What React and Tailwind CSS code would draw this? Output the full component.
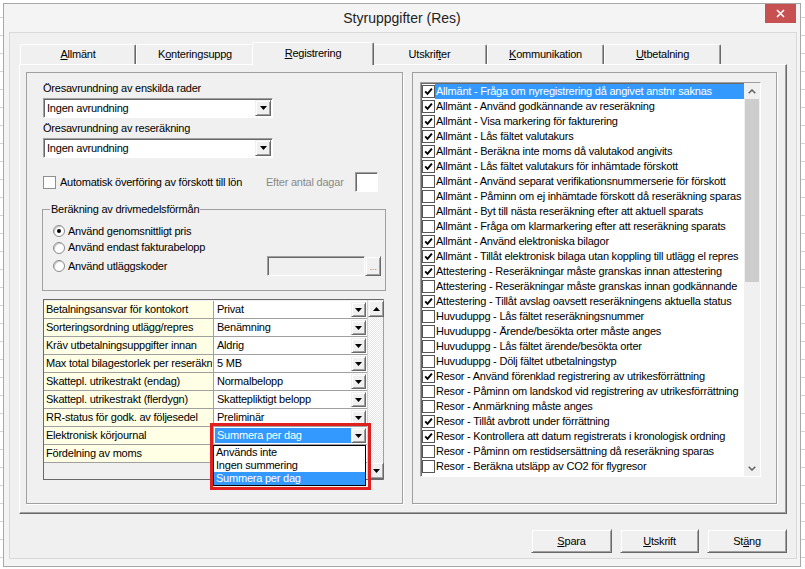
import React from "react";

const items = [
  ["Allmänt - Fråga om nyregistrering då angivet anstnr saknas", true],
  ["Allmänt - Använd godkännande av reseräkning", true],
  ["Allmänt - Visa markering för fakturering", true],
  ["Allmänt - Lås fältet valutakurs", true],
  ["Allmänt - Beräkna inte moms då valutakod angivits", true],
  ["Allmänt - Lås fältet valutakurs för inhämtade förskott", true],
  ["Allmänt - Använd separat verifikationsnummerserie för förskott", false],
  ["Allmänt - Påminn om ej inhämtade förskott då reseräkning sparas", false],
  ["Allmänt - Byt till nästa reseräkning efter att aktuell sparats", false],
  ["Allmänt - Fråga om klarmarkering efter att reseräkning sparats", false],
  ["Allmänt - Använd elektroniska bilagor", true],
  ["Allmänt - Tillåt elektronisk bilaga utan koppling till utlägg el repres", true],
  ["Attestering - Reseräkningar måste granskas innan attestering", true],
  ["Attestering - Reseräkningar måste granskas innan godkännande", false],
  ["Attestering - Tillåt avslag oavsett reseräkningens aktuella status", true],
  ["Huvuduppg - Lås fältet reseräkningsnummer", false],
  ["Huvuduppg - Ärende/besökta orter måste anges", false],
  ["Huvuduppg - Lås fältet ärende/besökta orter", false],
  ["Huvuduppg - Dölj fältet utbetalningstyp", false],
  ["Resor - Använd förenklad registrering av utrikesförrättning", true],
  ["Resor - Påminn om landskod vid registrering av utrikesförrättning", false],
  ["Resor - Anmärkning måste anges", false],
  ["Resor - Tillåt avbrott under förrättning", true],
  ["Resor - Kontrollera att datum registrerats i kronologisk ordning", true],
  ["Resor - Påminn om restidsersättning då reseräkning sparas", false],
  ["Resor - Beräkna utsläpp av CO2 för flygresor", false],
];

const rows = [
  ["Betalningsansvar för kontokort", "Privat"],
  ["Sorteringsordning utlägg/repres", "Benämning"],
  ["Kräv utbetalningsuppgifter innan", "Aldrig"],
  ["Max total bilagestorlek per reseräkning", "5 MB"],
  ["Skattepl. utrikestrakt (endag)", "Normalbelopp"],
  ["Skattepl. utrikestrakt (flerdygn)", "Skattepliktigt belopp"],
  ["RR-status för godk. av följesedel", "Preliminär"],
  ["Elektronisk körjournal", "Summera per dag"],
  ["Fördelning av moms", ""],
];

const tabs = [
  { pre: "", key: "A", post: "llmänt", w: "w-[116px]" },
  { pre: "K", key: "o", post: "nteringsuppg", w: "w-[118px]" },
  { pre: "", key: "R", post: "egistrering", w: "w-[122px]", sel: true },
  { pre: "Utskrif", key: "t", post: "er", w: "w-[115px]" },
  { pre: "", key: "K", post: "ommunikation", w: "w-[117px]" },
  { pre: "", key: "U", post: "tbetalning", w: "w-[117px]" },
];

const Down = () => (
  <svg width="7" height="4" viewBox="0 0 7 4">
    <path d="M0 0H7L3.5 4Z" fill="#000" />
  </svg>
);
const Up = () => (
  <svg width="7" height="4" viewBox="0 0 7 4">
    <path d="M0 4H7L3.5 0Z" fill="#000" />
  </svg>
);

const raised =
  "bg-[#f0f0f0] border border-t-[#f0f0f0] border-l-[#f0f0f0] border-r-[#696969] border-b-[#696969] shadow-[inset_1px_1px_0_#ffffff,inset_-1px_-1px_0_#a0a0a0]";
const sunken =
  "border border-t-[#a0a0a0] border-l-[#a0a0a0] border-r-white border-b-white shadow-[inset_1px_1px_0_#696969]";

function ArrowBtn({ className, up }) {
  return (
    <span className={"flex items-center justify-center shrink-0 " + raised + " " + className}>
      {up ? <Up /> : <Down />}
    </span>
  );
}

function Check({ on }) {
  return (
    <span className="w-[13px] h-[13px] shrink-0 border border-[#555555] bg-white flex items-center justify-center">
      {on && (
        <svg width="9" height="9" viewBox="0 0 9 9">
          <path d="M1.2 4.4 L3.5 6.8 L7.9 1.6" fill="none" stroke="#000" strokeWidth="1.9" />
        </svg>
      )}
    </span>
  );
}

function Radio({ on }) {
  return (
    <span className="w-[12px] h-[12px] rounded-full bg-white border border-[#8a8a8a] shrink-0 flex items-center justify-center shadow-[inset_1px_1px_0_#c8c8c8]">
      {on && <span className="w-[4px] h-[4px] rounded-full bg-black" />}
    </span>
  );
}

function Select({ value }) {
  return (
    <div className={"w-[230px] h-[20px] flex bg-white p-[1px] " + sunken}>
      <span className="flex-1 flex items-center pl-[2px] whitespace-nowrap">{value}</span>
      <ArrowBtn className="w-[16px] h-[16px]" />
    </div>
  );
}

function Button({ pre, k, post, w }) {
  return (
    <div className={"h-[24px] flex items-center justify-center " + raised + " " + w}>
      <span>
        {pre}
        <u>{k}</u>
        {post}
      </span>
    </div>
  );
}

export default function App() {
  return (
    <div className="w-[805px] h-[569px] overflow-hidden bg-white bg-[image:repeating-linear-gradient(to_bottom,transparent_0px,transparent_17px,#d4d4d4_17px,#d4d4d4_18px)] font-['Liberation_Sans',Arial,sans-serif] text-[11px] leading-[13px] tracking-[-0.22px] text-black">
      <div className="ml-[3px] mt-[3px] w-[798px] h-[564px] border border-[#a8a8a8] bg-[#f4f4f4] flex flex-col">
        {/* title bar */}
        <div className="h-[28px] flex items-start shrink-0">
          <div className="w-[35px] shrink-0" />
          <div className="flex-1 text-center text-[14px] leading-[28px] tracking-normal text-[#222222]">
            Styruppgifter (Res)
          </div>
          <div className="w-[31px] h-[19px] mr-[4px] bg-[#c75050] flex items-center justify-center">
            <svg width="9" height="9" viewBox="0 0 9 9">
              <path d="M1 1L8 8M8 1L1 8" stroke="#fff" strokeWidth="1.6" />
            </svg>
          </div>
        </div>

        {/* client */}
        <div className="ml-[5px] w-[788px] h-[527px] border border-[#d9d9d9] bg-[#f0f0f0] flex flex-col pl-[9px] pt-[9px]">
          {/* tabs */}
          <div className="flex items-end h-[22px] pl-[1px]">
            {tabs.map((t, i) =>
              t.sel ? (
                <div
                  key={i}
                  className={
                    "relative z-10 -mx-[2px] -mb-[1px] h-[23px] bg-[#f0f0f0] border-t border-l border-r border-t-white border-l-white border-r-[#696969] shadow-[inset_-1px_0_0_#a0a0a0] rounded-t-[2px] flex items-start justify-center pt-[4px] " +
                    t.w
                  }
                >
                  <span>
                    {t.pre}
                    <u>{t.key}</u>
                    {t.post}
                  </span>
                </div>
              ) : (
                <div
                  key={i}
                  className={
                    "h-[20px] bg-[#f0f0f0] border-t border-l border-r border-t-white border-l-white border-r-[#696969] shadow-[inset_-1px_0_0_#a0a0a0] rounded-t-[2px] flex items-center justify-center " +
                    t.w
                  }
                >
                  <span>
                    {t.pre}
                    <u>{t.key}</u>
                    {t.post}
                  </span>
                </div>
              )
            )}
          </div>

          {/* panel */}
          <div className="w-[768px] h-[450px] border border-t-white border-l-white border-r-[#696969] border-b-[#696969] shadow-[inset_-1px_-1px_0_#a0a0a0] flex pl-[6px] pt-[7px]">
            {/* left box */}
            <div className="w-[377px] h-[432px] border border-[#a0a0a0] shadow-[1px_1px_0_#ffffff] flex flex-col pl-[16px] pt-[9px]">
              <div className="h-[13px]">Öresavrundning av enskilda rader</div>
              <div className="mt-[3px]">
                <Select value="Ingen avrundning" />
              </div>
              <div className="h-[13px] mt-[4px]">Öresavrundning av reseräkning</div>
              <div className="mt-[3px]">
                <Select value="Ingen avrundning" />
              </div>

              <div className="mt-[14px] h-[20px] flex items-center">
                <span className="w-[13px] h-[13px] shrink-0 bg-white border border-[#8e8f8f]" />
                <span className="ml-[4px] w-[206px] whitespace-nowrap">Automatisk överföring av förskott till lön</span>
                <span className="w-[89px] text-[#8a8a8a] whitespace-nowrap">Efter antal dagar</span>
                <span className={"w-[23px] h-[20px] bg-white " + sunken} />
              </div>

              <fieldset className="mt-[11px] -ml-[1px] w-[344px] border border-[#a0a0a0] pl-[7px] pr-[4px] pb-[14px]">
                <legend className="px-[1px] h-[13px] leading-[13px]">Beräkning av drivmedelsförmån</legend>
                <div className="mt-[7px] h-[16px] flex items-center">
                  <span className="ml-[3px]"><Radio on /></span>
                  <span className="ml-[3px]">Använd genomsnittligt pris</span>
                </div>
                <div className="h-[17px] flex items-center">
                  <span className="ml-[3px]"><Radio /></span>
                  <span className="ml-[3px]">Använd endast fakturabelopp</span>
                </div>
                <div className="h-[20px] flex items-center">
                  <span className="ml-[3px]"><Radio /></span>
                  <span className="ml-[3px]">Använd utläggskoder</span>
                  <span className={"ml-auto w-[98px] h-[20px] bg-[#f0f0f0] " + sunken} />
                  <span className={"w-[16px] h-[20px] flex items-end justify-center pb-[3px] text-[9px] leading-[9px] text-[#8a8a8a] " + raised}>...</span>
                </div>
              </fieldset>

              {/* grid */}
              <div className="mt-[8px] w-[341px] h-[181px] border border-t-[#696969] border-l-[#696969] border-r-[#a0a0a0] border-b-[#696969] flex relative">
                <div className="w-[323px] flex flex-col pt-[1px]">
                  {rows.map((r, i) => (
                    <div key={i} className="h-[18px] flex border-b border-[#a0a0a0] shrink-0">
                      <div className="w-[170px] shrink-0 bg-[#ffffe6] border-r border-[#a0a0a0] pl-[2px] flex items-center whitespace-nowrap overflow-hidden">
                        <span className="block w-[166px] overflow-hidden">{r[0]}</span>
                      </div>
                      <div className="flex-1 bg-white flex items-center">
                        {i === 7 ? (
                          <span className="ml-[1px] flex-1 h-[15px] bg-[#3399ff] text-white pl-[2px] flex items-center whitespace-nowrap">
                            {r[1]}
                          </span>
                        ) : (
                          <span className="flex-1 pl-[3px] whitespace-nowrap overflow-hidden">{r[1]}</span>
                        )}
                        {i < 8 && <ArrowBtn className="w-[15px] h-[15px] mr-[1px]" />}
                      </div>
                    </div>
                  ))}
                  <div className="flex-1 bg-[#f0f0f0]" />
                </div>
                <div className="w-[16px] flex flex-col border-l border-[#d0d0d0]">
                  <ArrowBtn up className="w-[16px] h-[17px]" />
                  <div className="flex-1 bg-[image:repeating-conic-gradient(#ffffff_0%_25%,#e4e4e4_0%_50%)] bg-[length:2px_2px]" />
                  <ArrowBtn className="w-[16px] h-[17px]" />
                </div>

                {/* open dropdown */}
                <div className="absolute left-[169px] top-[145px] w-[153px] h-[41px] bg-white border border-black flex flex-col z-10">
                  <div className="h-[13px] pl-[2px] whitespace-nowrap">Används inte</div>
                  <div className="h-[13px] pl-[2px] whitespace-nowrap">Ingen summering</div>
                  <div className="h-[13px] pl-[2px] bg-[#3399ff] text-white whitespace-nowrap">Summera per dag</div>
                </div>
                {/* red annotation */}
                <div className="absolute left-[166px] top-[123px] w-[161px] h-[67px] border-[3px] border-[#e0201f] z-20 pointer-events-none" />
              </div>
            </div>

            {/* right box */}
            <div className="ml-[9px] w-[365px] h-[432px] border border-[#a0a0a0] shadow-[1px_1px_0_#ffffff] pl-[7px] pt-[9px]">
              <div className={"w-[341px] h-[395px] bg-white flex " + sunken}>
                <div className="w-[323px] flex flex-col pt-[1px]">
                  {items.map((it, i) => (
                    <div key={i} className="h-[15px] flex items-center shrink-0 pl-[1px]">
                      <Check on={it[1]} />
                      <span
                        className={
                          "flex-1 h-[15px] pl-[1px] flex items-center whitespace-nowrap overflow-hidden " +
                          (i === 0 ? "bg-[#3399ff] text-white" : "")
                        }
                      >
                        {it[0]}
                      </span>
                    </div>
                  ))}
                </div>
                <div className="w-[16px] bg-[#f0f0f0] flex flex-col">
                  <div className="h-[16px] flex items-center justify-center">
                    <svg width="8" height="5" viewBox="0 0 8 5">
                      <path d="M0.7 4.3L4 1L7.3 4.3" fill="none" stroke="#606060" strokeWidth="1.5" />
                    </svg>
                  </div>
                  <div className="mx-[1px] h-[183px] bg-[#cdcdcd]" />
                  <div className="flex-1" />
                  <div className="h-[16px] flex items-center justify-center">
                    <svg width="8" height="5" viewBox="0 0 8 5">
                      <path d="M0.7 0.7L4 4L7.3 0.7" fill="none" stroke="#606060" strokeWidth="1.5" />
                    </svg>
                  </div>
                </div>
              </div>
            </div>
          </div>

          {/* buttons */}
          <div className="mt-[15px] w-[768px] flex justify-end gap-[8px]">
            <Button pre="" k="S" post="para" w="w-[81px]" />
            <Button pre="" k="U" post="tskrift" w="w-[79px]" />
            <Button pre="St" k="ä" post="ng" w="w-[80px]" />
          </div>
        </div>
      </div>
    </div>
  );
}
